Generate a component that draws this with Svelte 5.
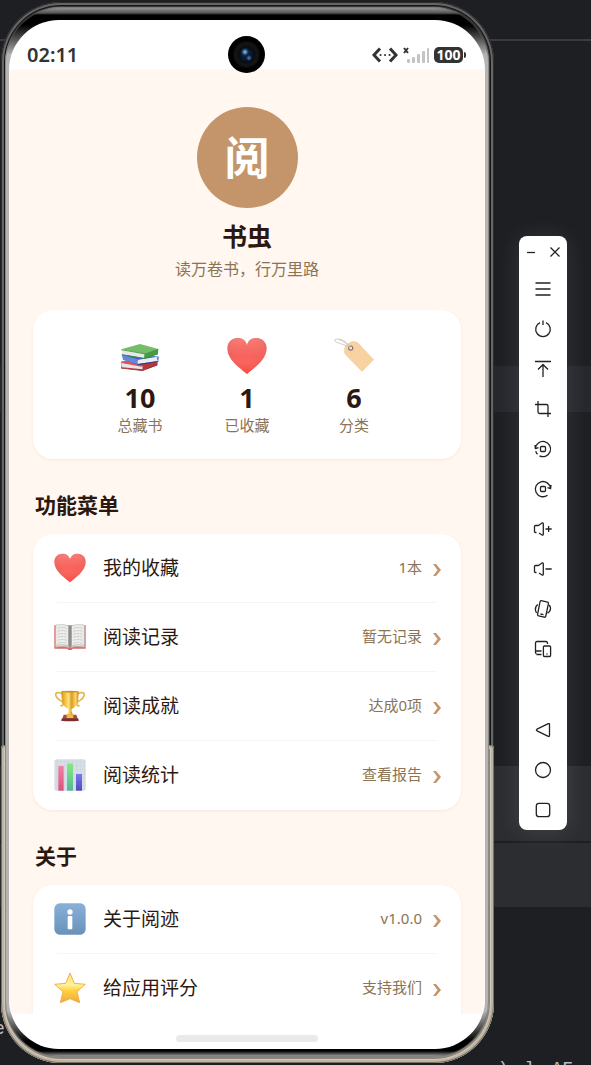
<script>
    let stats = [
        { icon: "books", value: 10, label: "总藏书" },
        { icon: "heart", value: 1, label: "已收藏" },
        { icon: "tag", value: 6, label: "分类" }
    ];

    let sections = [
        {
            title: "功能菜单",
            items: [
                { icon: "heart", label: "我的收藏", value: "1本" },
                { icon: "book", label: "阅读记录", value: "暂无记录" },
                { icon: "trophy", label: "阅读成就", value: "达成0项" },
                { icon: "chart", label: "阅读统计", value: "查看报告" }
            ]
        },
        {
            title: "关于",
            items: [
                { icon: "info", label: "关于阅迹", value: "v1.0.0" },
                { icon: "star", label: "给应用评分", value: "支持我们" }
            ]
        }
    ];

    // stroke paths on a 20x20 grid
    let tools = [
        { name: "Menu", d: "M2.500 4H17.500M2.500 10H17.500M2.500 16H17.500" },
        { name: "Power", d: "M7 3.600A7.300 7.300 0 1 0 13 3.600M10 1.500V6" },
        { name: "Swipe up", d: "M2 2.500H18M10 18V6M5 10.500L10 5.500L15 10.500" },
        { name: "Screenshot", d: "M5 2V13Q5 14.500 6.500 14.500H18M2 5.500H13.500Q15 5.500 15 7V18" },
        { name: "Rotate left", d: "M2.400 9.500A7.600 7.600 0 1 1 6.500 16.800M2 6L2.400 9.600L5.500 8.600M2.700 12.200A7.600 7.600 0 0 0 4.500 15.300M8.500 7.500H11.500Q12.500 7.500 12.500 8.500V11.500Q12.500 12.500 11.500 12.500H8.500Q7.500 12.500 7.500 11.500V8.500Q7.500 7.500 8.500 7.500Z" },
        { name: "Rotate right", d: "M17.500 9.500A7.600 7.600 0 1 0 14.500 16.200M18 6L17.600 9.600L14.500 8.600M8.500 7.500H11.500Q12.500 7.500 12.500 8.500V11.500Q12.500 12.500 11.500 12.500H8.500Q7.500 12.500 7.500 11.500V8.500Q7.500 7.500 8.500 7.500Z" },
        { name: "Volume up", d: "M3.500 13.500H2.500Q1.500 13.500 1.500 12.500V7.500Q1.500 6.500 2.500 6.500H5.500L9 4Q10.300 3.400 10.300 5V15Q10.300 16.600 9 16L6 14M12.500 10H18.700M15.600 7V13" },
        { name: "Volume down", d: "M3.500 13.500H2.500Q1.500 13.500 1.500 12.500V7.500Q1.500 6.500 2.500 6.500H5.500L9 4Q10.300 3.400 10.300 5V15Q10.300 16.600 9 16L6 14M12.500 10H18.700" },
        { name: "Rotate screen", d: "M8.300 1.700L14.500 3.200Q15.700 3.500 15.400 4.700L12.800 17Q12.500 18.500 11.300 18.200L5.500 16.800Q4.300 16.500 4.600 15.300L7 2.800Q7.300 1.500 8.300 1.700ZM7.500 15L10.500 15.700M4.800 5.500Q2 7.500 2.400 11Q2.600 12.500 3.700 13.800M16.200 6Q17.600 7.500 17.500 9.500Q17.300 12.700 14.500 14.300" },
        { name: "Devices", d: "M14.500 5V4Q14.500 2.500 13 2.500H4Q2.500 2.500 2.500 4V13.500Q2.500 14.500 3.500 14.500M2.500 12H8.500M3.500 15.500H8.500M11.500 7H16.500Q17.600 7 17.600 8.200V16.300Q17.600 17.500 16.500 17.500H11.500Q10.400 17.500 10.400 16.300V8.200Q10.400 7 11.500 7ZM13.500 15H14.500" }
    ];

    let navTools = [
        { name: "Back", d: "M15.300 3.700Q16.500 3.200 16.500 4.500V15.500Q16.500 16.800 15.300 16.300L4 10.800Q2.800 10 4 9.200Z" },
        { name: "Home", d: "M10 2.500A7.500 7.500 0 1 0 10 17.500A7.500 7.500 0 1 0 10 2.500Z" },
        { name: "Recent", d: "M6 3.300H14Q16.700 3.300 16.700 6V14Q16.700 16.700 14 16.700H6Q3.300 16.700 3.300 14V6Q3.300 3.300 6 3.300Z" }
    ];

    let bars = [4, 6, 9, 12, 15];
    let gridLines = [8, 20, 32, 44, 56, 68, 80, 92];
</script>

{#snippet emoji(name)}
    <svg class="emoji" viewBox="0 0 96 96" aria-hidden="true">
        {#if name === "heart"}
            <defs>
                <radialGradient id="heart" cx=".48" cy=".6" r=".7">
                    <stop offset="0" stop-color="#fa655e" />
                    <stop offset=".5" stop-color="#f4625c" />
                    <stop offset=".8" stop-color="#ec5e58" />
                    <stop offset="1" stop-color="#cf4a47" />
                </radialGradient>
                <linearGradient id="shine" x2="0" y2="1">
                    <stop stop-color="#ff8f89" stop-opacity=".7" />
                    <stop offset=".5" stop-color="#ff7f79" stop-opacity="0" />
                    <stop offset=".7" stop-color="#ff3f35" stop-opacity="0" />
                    <stop offset="1" stop-color="#ff3f35" stop-opacity=".7" />
                </linearGradient>
            </defs>
            <path fill="url(#heart)" d="M48 91C32 77 1 58 1 30C1 14 13 5 26 5C37 5 45 11 48 22C51 11 59 5 70 5C83 5 95 14 95 30C95 58 64 77 48 91Z" />
            <path fill="url(#shine)" d="M48 91C32 77 1 58 1 30C1 14 13 5 26 5C37 5 45 11 48 22C51 11 59 5 70 5C83 5 95 14 95 30C95 58 64 77 48 91Z" />
        {:else if name === "books"}
            <path fill="#b9363d" d="M4 62L52 54L91 61L89 70L54 83L3 77Z" />
            <path fill="#e8e6e7" d="M5 64L54 72V80L5 75Q2 69 5 64Z" />
            <path fill="#e2545a" d="M2 62L25 58L55 72L51 74L4 65Z" />
            <path fill="#8e252b" d="M2 76L54 82L90 68V70L54 84L3 78Z" />
            <path fill="#3561bd" d="M5 44L91 49L93 50L92 60L43 69L8 57Z" />
            <path fill="#6489d8" d="M5 45L43 56V68L7 57Z" />
            <path fill="#ececf1" d="M44 57L90 50Q88 55 91 60L44 67Q40 62 44 57Z" />
            <path fill="#233f8a" d="M43 67L92 60V62L43 70Z" />
            <path fill="#469c45" d="M92 31L91 43L58 55V44Z" />
            <path fill="#74bd68" d="M3 32L48 19L92 31L60 43Z" />
            <path fill="#e9e8e7" d="M5 35L58 44V53L6 44Q3 39 5 35Z" />
            <path fill="none" stroke="#3e8e3c" stroke-width="2" d="M3 33L60 43L92 32M4 45L58 54L91 43" />
        {:else if name === "tag"}
            <path fill="#f9d2a2" stroke="#efc18c" d="M25 31Q25 25 31 21L39 15Q45 12 52 14L58 17L95 57L67 85L28 45Q25 41 25 37Z" />
            <circle cx="40" cy="29" r="5" fill="#fff" stroke="#8e746d" stroke-width="3" />
            <path fill="none" stroke="#c8c0bc" stroke-width="2" d="M40 29C27 14 8 3 2 9C-1 17 22 17 40 29M40 29C34 17 22 7 10 8" />
        {:else if name === "book"}
            <path fill="#d96c66" d="M1 13H95V83H56L53 87H43L40 83H1Z" />
            <path fill="#ededec" stroke="#b8b8b8" stroke-width="2" d="M5 12Q26 8 48 15Q70 8 91 12V78Q67 73 48 80Q29 73 5 78Z" />
            <path fill="none" stroke="#cbcbca" stroke-width="3" stroke-dasharray="8 2" d="M11 22Q25 17 38 22M11 31Q25 26 38 31M11 40Q25 35 38 40M11 49Q25 44 38 49M11 58Q25 53 38 58M11 67Q25 62 38 67M58 22Q72 17 85 22M58 31Q72 26 85 31M58 40Q72 35 85 40M58 49Q72 44 85 49M58 58Q72 53 85 58M58 67Q72 62 85 67" />
            <path fill="#a8a8a9" d="M42 13L48 16L54 13V76L48 80L42 76Z" />
            <path stroke="#707070" stroke-width="3" d="M48 14V80" />
            <path fill="none" stroke="#a5a5a5" stroke-width="2" d="M5 73Q29 68 48 76Q67 68 91 73" />
        {:else if name === "trophy"}
            <defs>
                <linearGradient id="gold">
                    <stop offset="0" stop-color="#d0932c" />
                    <stop offset=".25" stop-color="#f9c643" />
                    <stop offset=".42" stop-color="#ffe27b" />
                    <stop offset=".6" stop-color="#d99b2c" />
                    <stop offset=".82" stop-color="#ffd75c" />
                    <stop offset="1" stop-color="#c98a25" />
                </linearGradient>
            </defs>
            <path fill="none" stroke="#e6b54b" stroke-width="5" d="M25 12Q20 7 10 8Q2 10 7 20Q10 27 18 31Q29 36 27 44Q24 51 20 45M71 12Q76 7 86 8Q94 10 89 20Q86 27 78 31Q67 36 69 44Q72 51 76 45" />
            <path fill="url(#gold)" d="M22 4H74Q74 29 70 40Q66 52 54 56Q51 58 53 65L58 75H38L43 65Q45 58 42 56Q30 52 26 40Q22 29 22 4Z" />
            <ellipse cx="48" cy="5" rx="26" ry="3" fill="#d19422" />
            <path fill="#a64c45" d="M29 74H67L71 86H25Z" />
            <path fill="#7c302e" d="M24 85H72L75 92Q48 96 21 92Z" />
            <path fill="#efbd3f" d="M38 73H58V84H38Z" />
        {:else if name === "chart"}
            <defs>
                <linearGradient id="pink" x2="0" y2="1"><stop stop-color="#f281a4" /><stop offset="1" stop-color="#d9527c" /></linearGradient>
                <linearGradient id="green" x2="0" y2="1"><stop stop-color="#87ea82" /><stop offset="1" stop-color="#54b795" /></linearGradient>
                <linearGradient id="blue" x2="0" y2="1"><stop stop-color="#7779ef" /><stop offset="1" stop-color="#504bbb" /></linearGradient>
            </defs>
            <rect x="1" y="1" width="94" height="94" rx="8" fill="#d8dee7" />
            {#each gridLines as line}
                <path stroke="#c6cdd8" stroke-width="1" d="M{line} 2V94M2 {line}H94" />
            {/each}
            <rect x="13" y="21" width="16" height="74" fill="url(#pink)" />
            <rect x="39" y="13" width="18" height="82" fill="url(#green)" />
            <rect x="66" y="45" width="18" height="50" fill="url(#blue)" />
        {:else if name === "info"}
            <defs>
                <linearGradient id="info" x2="0" y2="1"><stop stop-color="#88b0d8" /><stop offset="1" stop-color="#6992b9" /></linearGradient>
            </defs>
            <rect x="1" y="1" width="94" height="94" rx="16" fill="url(#info)" />
            <circle cx="48" cy="27" r="8" fill="#fff" />
            <rect x="41" y="39" width="14" height="40" rx="3" fill="#fff" />
        {:else if name === "star"}
            <defs>
                <linearGradient id="star" x2="0" y2="1"><stop stop-color="#ffe979" /><stop offset=".4" stop-color="#fff19c" /><stop offset=".6" stop-color="#ffd13e" /><stop offset="1" stop-color="#f3a63c" /></linearGradient>
            </defs>
            <path fill="url(#star)" stroke="#f0af48" stroke-width="3" stroke-linejoin="round" d="M48 3L61 34L94 37L69 59L77 92L48 80L19 92L27 59L2 37L35 34Z" />
        {/if}
    </svg>
{/snippet}

{#snippet tool(item)}
    <button aria-label={item.name}>
        <svg viewBox="0 0 20 20"><path d={item.d} /></svg>
    </button>
{/snippet}

<div class="desktop">
    <div class="editor" aria-hidden="true">
        <div class="tabs"></div>
        <div class="band current"></div>
        <div class="band panel"></div>
        <div class="band footer"></div>
        <div class="code first"><span>e</span></div>
        <div class="code last"><span>)</span><span>l</span><span>AF</span></div>
    </div>

    <div class="phone">
        <div class="bezel">
            <div class="screen">
                <header class="status">
                    <span class="time">02:11</span>
                    <div class="signals">
                        <svg class="network" viewBox="0 0 26 16"><path d="M8 1.500L2 8L8 14.500M18 1.500L24 8L18 14.500" /><path class="dots" d="M8.500 8H8.600M13 8H13.100M17.500 8H17.600" /></svg>
                        <svg class="signal" viewBox="0 0 26 16">
                            <path d="M1 1L5 6M5 1L1 6" />
                            {#each bars as bar, i}
                                <rect x={4 + i * 5} y={16 - bar} width="3" height={bar} rx="1" />
                            {/each}
                        </svg>
                        <span class="battery">100</span>
                    </div>
                    <span class="camera"></span>
                </header>

                <main>
                    <div class="profile">
                        <div class="avatar">阅</div>
                        <h1>书虫</h1>
                        <p>读万卷书，行万里路</p>
                    </div>

                    <div class="card stats">
                        {#each stats as stat}
                            <div class="stat">
                                {@render emoji(stat.icon)}
                                <strong>{stat.value}</strong>
                                <span>{stat.label}</span>
                            </div>
                        {/each}
                    </div>

                    {#each sections as section}
                        <h2>{section.title}</h2>
                        <div class="card menu">
                            {#each section.items as item}
                                <button class="row">
                                    {@render emoji(item.icon)}
                                    <span class="label">{item.label}</span>
                                    <span class="value">{item.value}</span>
                                    <svg class="chevron" viewBox="0 0 9 18"><path d="M1 5H4L9 11L4 17H1L5.500 11Z" /></svg>
                                </button>
                            {/each}
                        </div>
                    {/each}
                </main>

                <footer><span></span></footer>
            </div>
        </div>
    </div>

    <aside class="toolbar">
        <div class="window">
            <button aria-label="Minimize"><svg viewBox="0 0 12 12"><path d="M2 6.500H10" /></svg></button>
            <button aria-label="Close"><svg viewBox="0 0 12 12"><path d="M1.500 1.500L10.500 10.500M10.500 1.500L1.500 10.500" /></svg></button>
        </div>
        {#each tools as item}
            {@render tool(item)}
        {/each}
        <div class="spacer"></div>
        {#each navTools as item}
            {@render tool(item)}
        {/each}
    </aside>
</div>

<style>
    :global(body) {
        margin: 0;
        background: #1e1f22;
    }

    * {
        box-sizing: border-box;
    }

    button {
        padding: 0;
        border: 0;
        background: none;
        font: inherit;
        color: inherit;
        cursor: pointer;
    }

    .desktop {
        position: relative;
        display: flex;
        align-items: flex-start;
        height: 100vh;
        padding: 2px 24px 2px 1px;
        gap: 25px;
        overflow: hidden;
        font-family: "Noto Sans", "Noto Sans CJK SC", sans-serif;
        color: #2c1810;
    }

    /* IDE window behind the emulator */
    .editor {
        position: absolute;
        inset: 0;
        display: flex;
        flex-direction: column;
        overflow: hidden;
    }

    .editor > div {
        flex-shrink: 0;
    }

    .tabs {
        height: 41px;
        border-bottom: 2px solid #393b40;
    }

    .band {
        background: #2b2d30;
    }

    .current {
        height: 46px;
        margin-top: 325px;
        background: #26282e;
    }

    .panel {
        height: 75px;
        margin-top: 354px;
    }

    .footer {
        height: 64px;
        margin-top: 2px;
    }

    .code {
        display: flex;
        gap: 16px;
        font: 18px/20px "Liberation Mono", monospace;
        color: #bcbec4;
    }

    .first {
        margin-top: 112px;
        text-indent: -6px;
    }

    .last {
        justify-content: flex-end;
        margin-top: 20px;
        padding-right: 18px;
    }

    .phone {
        position: relative;
        flex: 1;
        min-width: 0;
        height: 100%;
        padding: 5px 5px 6px 4px;
        border-radius: 60px;
        background: #3a3a3a;
        box-shadow: inset 0 0 0 1px #2c2c2c, inset 0 0 0 3px #666765, inset 0 0 0 4px #161616;
    }

    /* lighter metal on the lower part of the frame */
    .phone::before {
        content: "";
        position: absolute;
        inset: 70% 0 0;
        border-radius: 4px 4px 60px 60px;
        background: #8c8579;
        box-shadow: inset 0 0 0 1px #777062, inset 0 0 0 3px #bdb4a5, inset 0 0 0 4px #d0c8bb;
    }

    .bezel {
        position: relative;
        height: 100%;
        padding: 13px 4px 8px;
        border-radius: 56px;
        background: linear-gradient(#a0a0a0, #555 6px, #000 8px, #000 18px, #b4b4b4 48px, #b4b4b4 calc(100% - 46px), #000 calc(100% - 16px), #000 calc(100% - 6px), #b0b0b0);
        box-shadow: inset 0 0 0 1px #66666688;
    }

    .screen {
        position: relative;
        display: flex;
        flex-direction: column;
        height: 100%;
        border-radius: 50px;
        background: #fff;
        overflow: hidden;
    }

    .status {
        position: relative;
        z-index: 1;
        display: flex;
        align-items: center;
        justify-content: space-between;
        height: 49px;
        padding: 20px 19px 0 18px;
        flex-shrink: 0;
    }

    .time {
        font-size: 20px;
        font-weight: 600;
        line-height: 28px;
        color: #333;
    }

    .signals {
        display: flex;
        align-items: center;
        gap: 5px;
    }

    .signals svg {
        width: 26px;
        height: 16px;
        fill: none;
        stroke: #333;
        stroke-width: 2;
    }

    .signals .network {
        stroke-width: 3;
    }

    .network .dots {
        stroke-width: 2;
        stroke-linecap: round;
    }

    .signal rect {
        fill: #c4c4c4;
        stroke: none;
    }

    .battery {
        position: relative;
        width: 29px;
        margin-right: 3px;
        border-radius: 5px;
        background: #333;
        font-size: 14px;
        font-weight: 700;
        line-height: 16px;
        text-align: center;
        color: #fff;
    }

    .battery::after {
        content: "";
        position: absolute;
        top: 5px;
        right: -3px;
        width: 2px;
        height: 6px;
        border-radius: 0 2px 2px 0;
        background: #333;
    }

    .camera {
        position: absolute;
        top: 16px;
        left: calc(50% - 19px);
        width: 37px;
        height: 37px;
        border-radius: 50%;
        background:
            radial-gradient(circle at 17px 16px, #a6d8f5, #2c659c 2px, transparent 4px),
            radial-gradient(circle at 21px 22px, #4286c4, transparent 3px),
            radial-gradient(circle, #0c1c34 4px, #080c14 8px, #141414 10px, #111 12px, #000 14px);
    }

    main {
        flex: 1;
        min-height: 0;
        padding: 38px 24px 0;
        background: #fff7f0;
        overflow: hidden;
    }

    .profile {
        display: flex;
        flex-direction: column;
        align-items: center;
    }

    .avatar {
        display: grid;
        place-items: center;
        width: 101px;
        height: 101px;
        border-radius: 50%;
        background: #c4956a;
        font-size: 45px;
        font-weight: 700;
        line-height: 60px;
        color: #fff;
    }

    h1 {
        margin: 11px 0 0;
        font-size: 25px;
        line-height: 34px;
    }

    p {
        margin: 4px 0 0;
        font-size: 16px;
        line-height: 24px;
        color: #8b7355;
    }

    .card {
        border-radius: 20px;
        background: #fff;
        box-shadow: 0 1px 3px #c4956a22;
    }

    .stats {
        display: grid;
        grid-template-columns: repeat(3, 25%);
        justify-content: center;
        margin-top: 29px;
        padding: 26px 0 23px;
    }

    .stat {
        display: flex;
        flex-direction: column;
        align-items: center;
    }

    .stat .emoji {
        width: 40px;
        height: 40px;
    }

    .stat strong {
        margin-top: 5px;
        font-size: 27px;
        line-height: 34px;
    }

    .stat span {
        font-size: 15px;
        line-height: 21px;
        color: #8b7355;
    }

    h2 {
        margin: 32px 2px 15px;
        font-size: 21px;
        line-height: 28px;
    }

    .menu:last-child {
        padding-bottom: 24px;
    }

    .row {
        position: relative;
        display: flex;
        align-items: center;
        width: 100%;
        height: 69px;
        padding: 0 20px 2px 21px;
        text-align: left;
    }

    .row:not(:last-child)::after {
        content: "";
        position: absolute;
        right: 24px;
        bottom: 0;
        left: 24px;
        height: 1px;
        background: #f5f5f5;
    }

    .row .emoji {
        width: 32px;
        height: 32px;
    }

    .label {
        flex: 1;
        margin-left: 17px;
        font-size: 19px;
        line-height: 28px;
    }

    .value {
        font-size: 15px;
        line-height: 23px;
        color: #8b7355;
    }

    .chevron {
        width: 9px;
        height: 18px;
        margin-left: 10px;
        fill: #c4956a;
    }

    footer {
        display: flex;
        justify-content: center;
        height: 35px;
        padding-top: 21px;
        flex-shrink: 0;
    }

    footer span {
        width: 30%;
        height: 7px;
        border-radius: 4px;
        background: #eaeaea;
    }

    .toolbar {
        position: relative;
        display: flex;
        flex-direction: column;
        width: 48px;
        margin-top: 234px;
        border-radius: 8px;
        background: #fff;
        box-shadow: 0 2px 24px #ffffff1c;
        flex-shrink: 0;
    }

    .toolbar button {
        display: grid;
        place-items: center;
        height: 40px;
    }

    .toolbar svg {
        width: 20px;
        height: 20px;
        fill: none;
        stroke: #222;
        stroke-width: 1.3;
        stroke-linejoin: round;
    }

    .window {
        display: flex;
        height: 33px;
    }

    .toolbar .window button {
        flex: 1;
        height: 32px;
    }

    .toolbar .window svg {
        width: 12px;
        height: 12px;
    }

    .spacer {
        height: 41px;
    }
</style>
